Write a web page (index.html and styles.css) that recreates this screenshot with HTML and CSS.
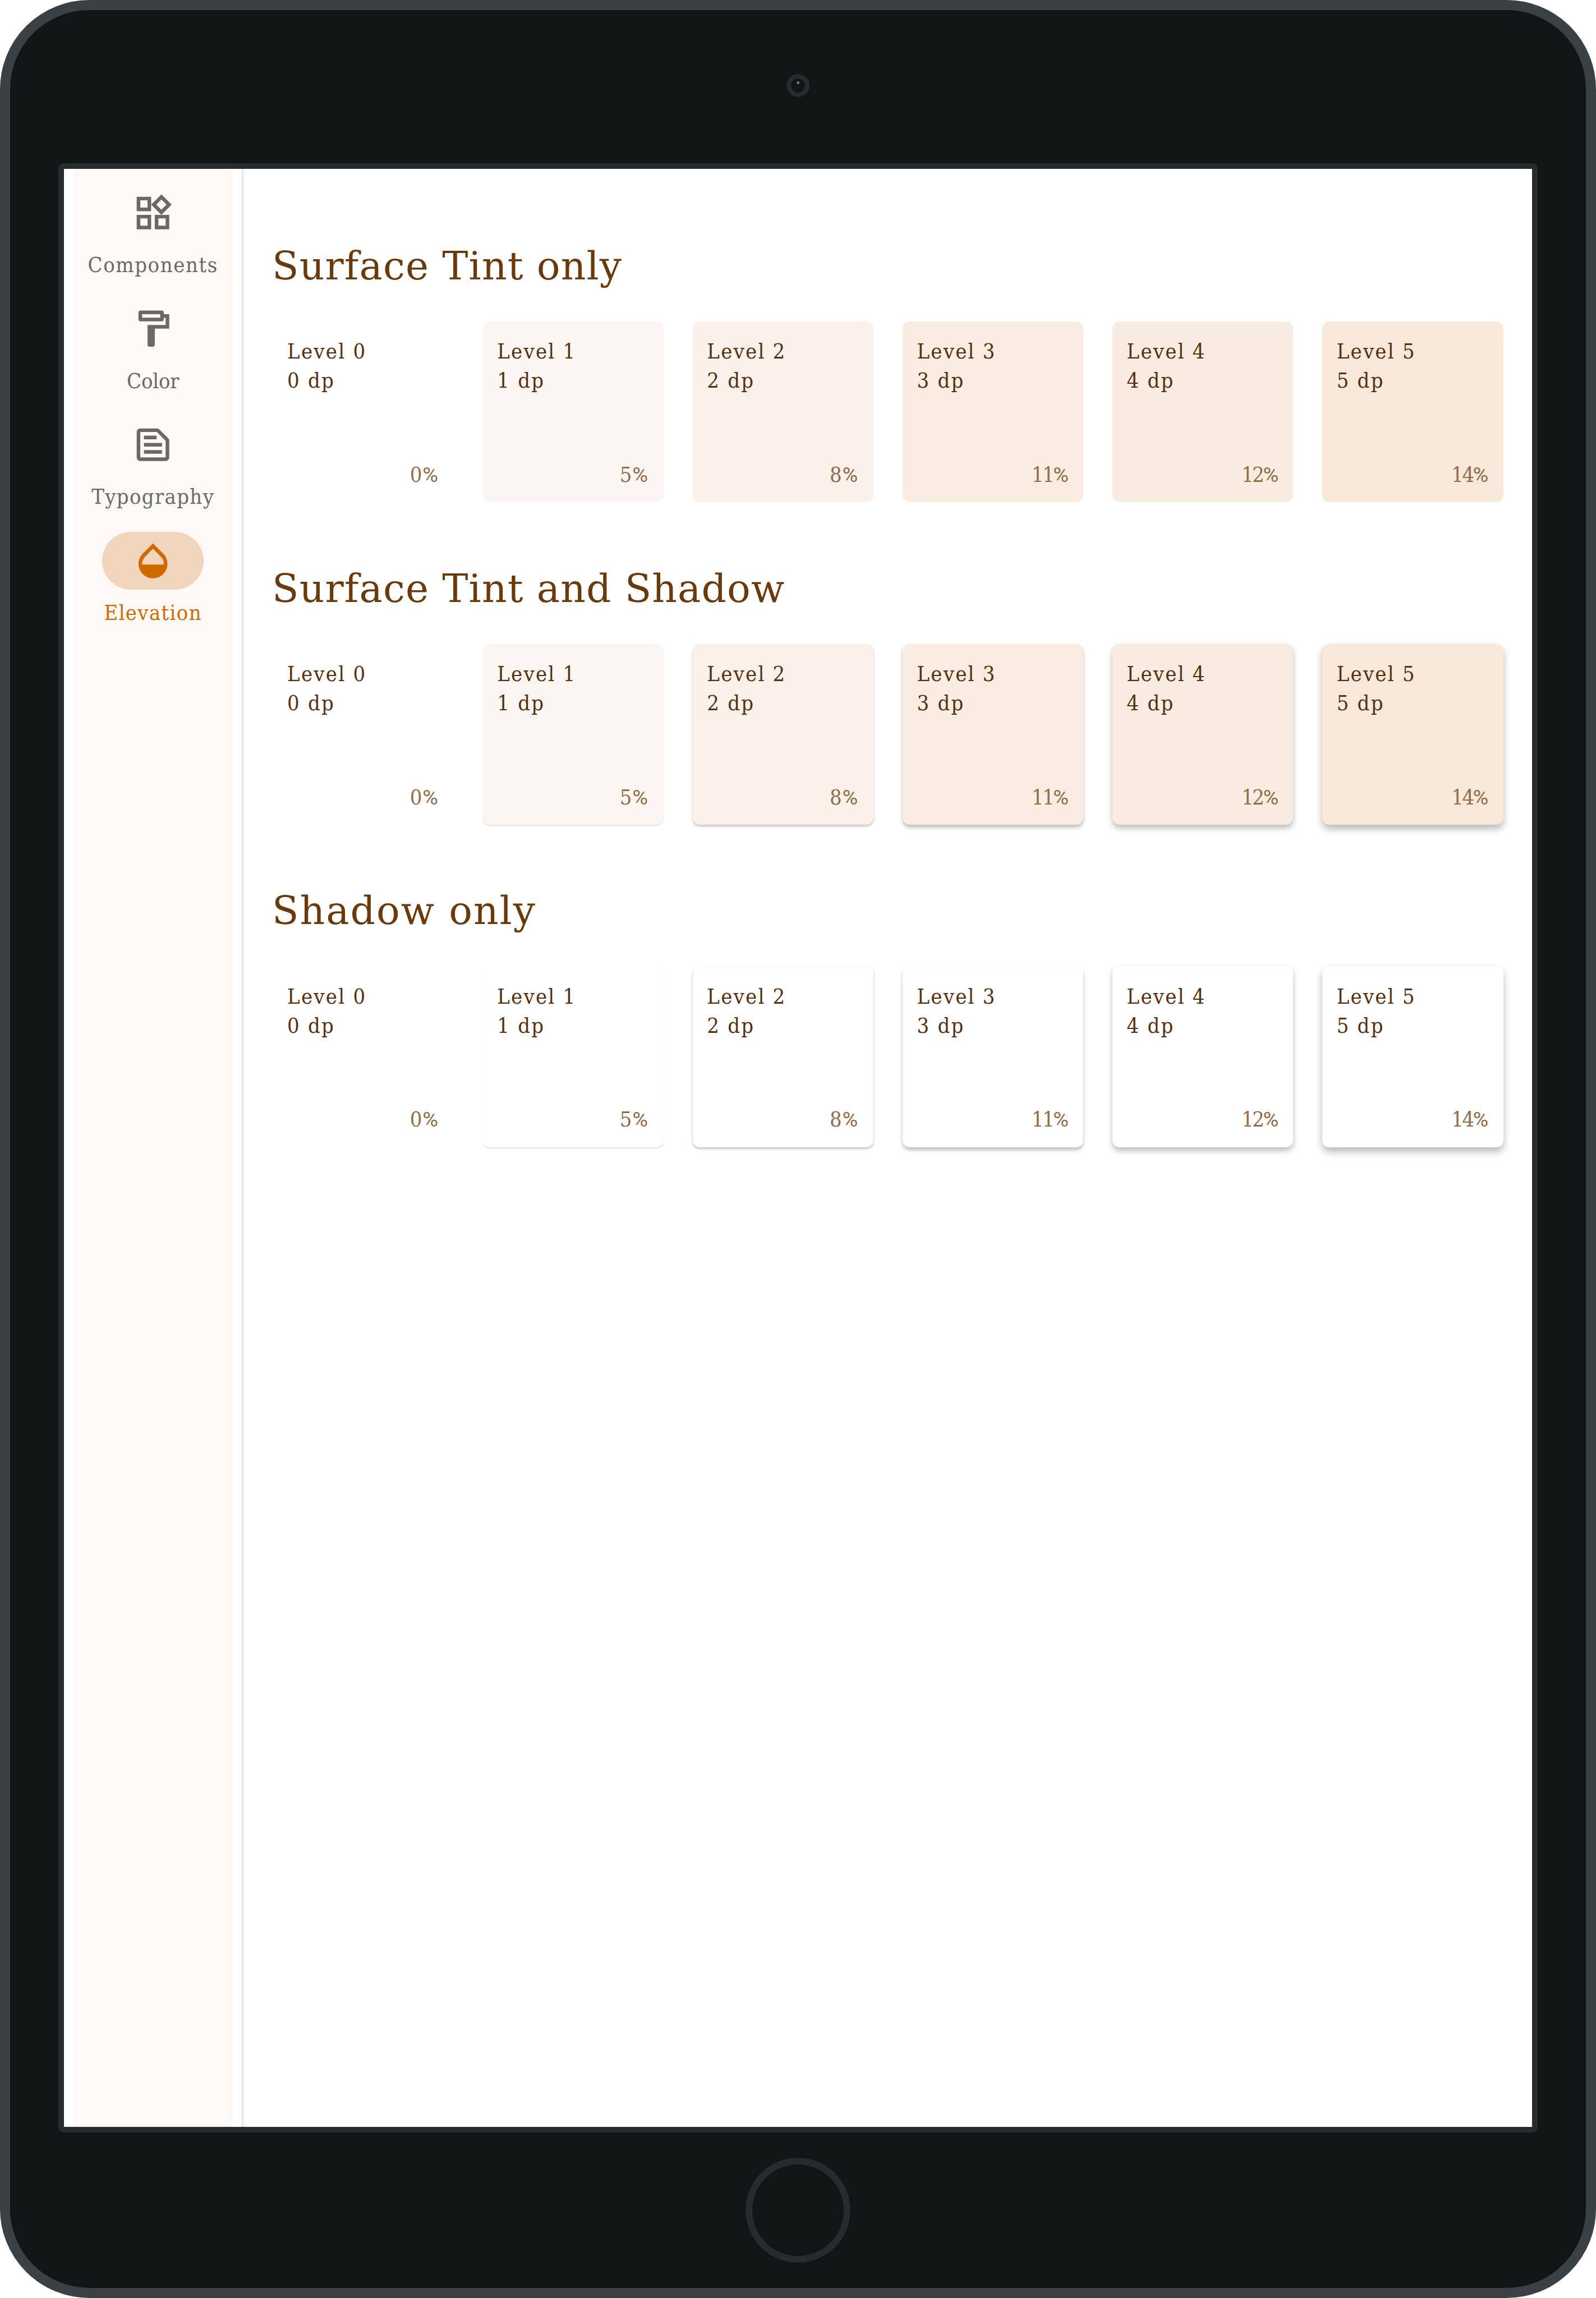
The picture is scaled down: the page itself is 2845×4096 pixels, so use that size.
FILE: index.html
```
<!DOCTYPE html>
<html lang="en">
<head>
<meta charset="utf-8">
<title>Elevation</title>
<link rel="stylesheet" href="styles.css">
</head>
<body>
<div class="tablet">
  <div class="camera"><span class="camera-glint"></span></div>
  <div class="screen">
    <nav class="rail">
      <a class="rail-item">
        <span class="rail-icon"><svg viewBox="0 0 24 24"><path d="M16.66 4.52l2.83 2.83-2.83 2.83-2.83-2.83 2.83-2.83M9 5v4H5V5h4m10 10v4h-4v-4h4M9 15v4H5v-4h4m7.66-13.31L11 7.34 16.66 13l5.66-5.66-5.66-5.65zM11 3H3v8h8V3zm10 10h-8v8h8v-8zm-10 0H3v8h8v-8z"/></svg></span>
        <span class="rail-label wide">Components</span>
      </a>
      <a class="rail-item">
        <span class="rail-icon"><svg viewBox="0 0 24 24"><path d="M18 4V3c0-.55-.45-1-1-1H5c-.55 0-1 .45-1 1v4c0 .55.45 1 1 1h12c.55 0 1-.45 1-1V6h1v4H9v11c0 .55.45 1 1 1h2c.55 0 1-.45 1-1v-9h8V4h-3zm-2 2H6V4h10v2z"/></svg></span>
        <span class="rail-label tight">Color</span>
      </a>
      <a class="rail-item">
        <span class="rail-icon"><svg viewBox="0 0 24 24"><path d="M14.17 5L19 9.83V19H5V5h9.17m0-2H5c-1.1 0-2 .9-2 2v14c0 1.1.9 2 2 2h14c1.1 0 2-.9 2-2V9.83c0-.53-.21-1.04-.59-1.41l-4.83-4.83c-.37-.38-.88-.59-1.41-.59zM7 15h10v2H7v-2zm0-4h10v2H7v-2zm0-4h7v2H7V7z"/></svg></span>
        <span class="rail-label">Typography</span>
      </a>
      <a class="rail-item active">
        <span class="rail-icon"><svg viewBox="0 0 24 24"><path d="M17.66 8L12 2.35 6.34 8C4.78 9.56 4 11.64 4 13.64s.78 4.11 2.34 5.67 3.61 2.35 5.66 2.35 4.1-.79 5.66-2.35S20 15.64 20 13.64 19.22 9.56 17.66 8zM6 14c.01-2 .62-3.27 1.76-4.4L12 5.27l4.24 4.38C17.38 10.77 17.99 12 18 14H6z"/></svg></span>
        <span class="rail-label">Elevation</span>
      </a>
    </nav>
    <main class="content">
      <section class="group tinted">
        <h2>Surface Tint only</h2>
        <div class="cards">
          <div class="card l0"><p>Level 0<br>0 dp</p><p class="pct">0<i>%</i></p></div>
          <div class="card l1"><p>Level 1<br>1 dp</p><p class="pct">5<i>%</i></p></div>
          <div class="card l2"><p>Level 2<br>2 dp</p><p class="pct">8<i>%</i></p></div>
          <div class="card l3"><p>Level 3<br>3 dp</p><p class="pct double">11<i>%</i></p></div>
          <div class="card l4"><p>Level 4<br>4 dp</p><p class="pct double">12<i>%</i></p></div>
          <div class="card l5"><p>Level 5<br>5 dp</p><p class="pct double">14<i>%</i></p></div>
        </div>
      </section>
      <section class="group tinted shadowed">
        <h2>Surface Tint and Shadow</h2>
        <div class="cards">
          <div class="card l0"><p>Level 0<br>0 dp</p><p class="pct">0<i>%</i></p></div>
          <div class="card l1"><p>Level 1<br>1 dp</p><p class="pct">5<i>%</i></p></div>
          <div class="card l2"><p>Level 2<br>2 dp</p><p class="pct">8<i>%</i></p></div>
          <div class="card l3"><p>Level 3<br>3 dp</p><p class="pct double">11<i>%</i></p></div>
          <div class="card l4"><p>Level 4<br>4 dp</p><p class="pct double">12<i>%</i></p></div>
          <div class="card l5"><p>Level 5<br>5 dp</p><p class="pct double">14<i>%</i></p></div>
        </div>
      </section>
      <section class="group shadowed">
        <h2 class="loose">Shadow only</h2>
        <div class="cards">
          <div class="card l0"><p>Level 0<br>0 dp</p><p class="pct">0<i>%</i></p></div>
          <div class="card l1"><p>Level 1<br>1 dp</p><p class="pct">5<i>%</i></p></div>
          <div class="card l2"><p>Level 2<br>2 dp</p><p class="pct">8<i>%</i></p></div>
          <div class="card l3"><p>Level 3<br>3 dp</p><p class="pct double">11<i>%</i></p></div>
          <div class="card l4"><p>Level 4<br>4 dp</p><p class="pct double">12<i>%</i></p></div>
          <div class="card l5"><p>Level 5<br>5 dp</p><p class="pct double">14<i>%</i></p></div>
        </div>
      </section>
    </main>
  </div>
  <div class="home"></div>
</div>
</body>
</html>
```
FILE: styles.css
```
/* 0.01rem is one design pixel. */
html {
  font-size: 85.027px;
  background: #fff;
}

* {
  box-sizing: border-box;
}

body {
  margin: 0;
  overflow: hidden;
}

p, h2 {
  margin: 0;
}

/* Device */
.tablet {
  width: 100vw;
  height: 100vh;
  display: flex;
  flex-direction: column;
  align-items: center;
  background: #111516;
  border: 0.215rem solid #3a4144;
  border-radius: 1.87rem;
}

.camera {
  width: 0.48rem;
  height: 0.48rem;
  margin-top: 1.338rem;
  border: 0.095rem solid #262b2d;
  border-radius: 50%;
  display: flex;
  justify-content: center;
  padding-top: 0.06rem;
}

.camera-glint {
  width: 0.065rem;
  height: 0.065rem;
  border-radius: 50%;
  background: #6d7b80;
}

.screen {
  width: 31.005rem;
  height: 41.275rem;
  margin-top: 1.393rem;
  display: flex;
  border: 0.118rem solid #262b2d;
  border-radius: 0.11rem;
  background: #fff;
}

.home {
  width: 2.2rem;
  height: 2.2rem;
  margin-top: 0.535rem;
  border: 0.143rem solid #262b2d;
  border-radius: 50%;
}

/* Navigation rail */
.rail {
  flex: none;
  width: 3.76rem;
  padding-top: 0.31rem;
  display: flex;
  flex-direction: column;
  align-items: center;
  gap: 0.4285rem;
  border-right: 0.04rem solid #e4e4e4;
  background: linear-gradient(#fdf9f6, #fdf9f6) 0.19rem 0 / 3.345rem 100% no-repeat;
}

.rail-item {
  display: flex;
  flex-direction: column;
  align-items: center;
  gap: 0.184rem;
  color: #6d6864;
}

.rail-icon {
  width: 2.13rem;
  height: 1.22rem;
  display: flex;
  align-items: center;
  justify-content: center;
  border-radius: 0.61rem;
}

.rail-icon svg {
  width: 0.91rem;
  height: 0.91rem;
  fill: currentColor;
}

.rail-label {
  font: 0.445rem/0.6rem "DejaVu Serif Condensed", "DejaVu Serif", serif;
  letter-spacing: 0.016rem;
}

.rail-label.wide {
  letter-spacing: 0.019rem;
}

.rail-label.tight {
  letter-spacing: -0.002rem;
}

.active {
  color: #d06900;
}

.active .rail-icon {
  background: #f1d6bb;
}

/* Elevation samples */
.content {
  flex: none;
  padding: 1.504rem 0 0 0.615rem;
  display: flex;
  flex-direction: column;
  gap: 1.275rem;
}

.group h2 {
  margin: 0 0 0.634rem -0.015rem;
  font: 400 0.815rem/1.06rem "DejaVu Serif", serif;
  letter-spacing: 0.0135rem;
  color: #6b3a0c;
}

.group h2.loose {
  letter-spacing: 0.024rem;
}

.cards {
  display: flex;
  gap: 0.605rem;
}

.card {
  width: 3.795rem;
  height: 3.791rem;
  padding: 0.336rem 0.34rem 0.269rem 0.303rem;
  display: flex;
  flex-direction: column;
  justify-content: space-between;
  border-radius: 0.15rem;
  font: 0.445rem/0.607rem "DejaVu Serif Condensed", "DejaVu Serif", serif;
  letter-spacing: 0.0265rem;
  color: #562f10;
}

.pct {
  align-self: flex-end;
  letter-spacing: 0.01rem;
  margin-right: -0.01rem;
  color: #906c48;
}

.pct.double {
  letter-spacing: -0.03rem;
  margin-right: -0.03rem;
}

.pct i {
  font-family: Roboto, sans-serif;
  font-style: normal;
  letter-spacing: 0;
}

.tinted .l1 { background: #fcf6f2; }
.tinted .l2 { background: #fbf1ea; }
.tinted .l3 { background: #f9ece0; }
.tinted .l4 { background: #f8ece0; }
.tinted .l5 { background: #f8e8da; }

.shadowed .l1 { box-shadow: 0 0.02rem 0.02rem rgba(0, 0, 0, 0.12); }
.shadowed .l2 { box-shadow: 0 0.03rem 0.05rem rgba(0, 0, 0, 0.24); }
.shadowed .l3 { box-shadow: 0 0.05rem 0.08rem rgba(0, 0, 0, 0.25); }
.shadowed .l4 { box-shadow: 0 0.06rem 0.12rem rgba(0, 0, 0, 0.27); }
.shadowed .l5 { box-shadow: 0 0.09rem 0.16rem rgba(0, 0, 0, 0.28); }
```
